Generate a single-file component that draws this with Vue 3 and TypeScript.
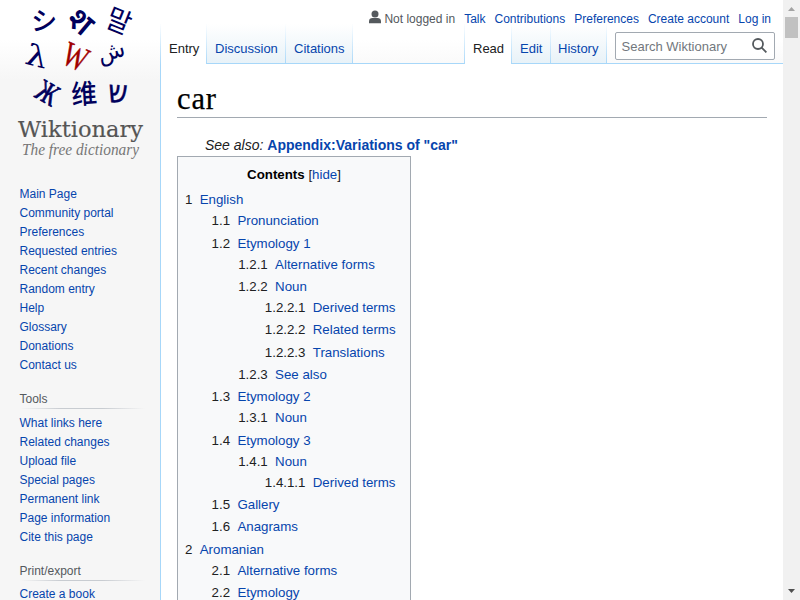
<script setup lang="ts">
interface Glyph { char: string; x: number; y: number; angle: number; size: number; stretch: number; kind: string }
interface TocEntry { number: string; text: string; step: number }
interface Portal { title: string; links: string[] }

const glyphs: Glyph[] = [
  { char: 'シ', x: 44, y: 21, angle: 2, size: 26, stretch: 1, kind: 'cjk' },
  { char: 'श', x: 81, y: 21, angle: 40, size: 32, stretch: 1, kind: 'sans' },
  { char: '말', x: 119, y: 21, angle: 22, size: 28, stretch: 0.95, kind: 'korean' },
  { char: 'λ', x: 37, y: 56, angle: 14, size: 29, stretch: 1.2, kind: 'serif' },
  { char: 'W', x: 76, y: 56, angle: 24, size: 35, stretch: 0.74, kind: 'red' },
  { char: 'ش', x: 111, y: 51, angle: -16, size: 23, stretch: 0.98, kind: 'arabic' },
  { char: 'Ж', x: 48, y: 92, angle: 30, size: 31, stretch: 0.74, kind: 'cyrillic' },
  { char: '维', x: 84, y: 94, angle: -4, size: 27, stretch: 0.95, kind: 'cjk' },
  { char: 'ש', x: 118, y: 91, angle: 2, size: 32, stretch: 0.85, kind: 'hebrew' }
]

const personal: string[] = ['Talk', 'Contributions', 'Preferences', 'Create account', 'Log in']

const portals: Portal[] = [
  {
    title: '',
    links: ['Main Page', 'Community portal', 'Preferences', 'Requested entries', 'Recent changes', 'Random entry', 'Help', 'Glossary', 'Donations', 'Contact us']
  },
  {
    title: 'Tools',
    links: ['What links here', 'Related changes', 'Upload file', 'Special pages', 'Permanent link', 'Page information', 'Cite this page']
  },
  { title: 'Print/export', links: ['Create a book'] }
]

const toc: TocEntry[] = [
  { number: '1', text: 'English', step: 21 },
  { number: '1.1', text: 'Pronunciation', step: 23 },
  { number: '1.2', text: 'Etymology 1', step: 21 },
  { number: '1.2.1', text: 'Alternative forms', step: 22 },
  { number: '1.2.2', text: 'Noun', step: 21 },
  { number: '1.2.2.1', text: 'Derived terms', step: 22 },
  { number: '1.2.2.2', text: 'Related terms', step: 23 },
  { number: '1.2.2.3', text: 'Translations', step: 22 },
  { number: '1.2.3', text: 'See also', step: 22 },
  { number: '1.3', text: 'Etymology 2', step: 21 },
  { number: '1.3.1', text: 'Noun', step: 23 },
  { number: '1.4', text: 'Etymology 3', step: 21 },
  { number: '1.4.1', text: 'Noun', step: 21 },
  { number: '1.4.1.1', text: 'Derived terms', step: 22 },
  { number: '1.5', text: 'Gallery', step: 22 },
  { number: '1.6', text: 'Anagrams', step: 23 },
  { number: '2', text: 'Aromanian', step: 21 },
  { number: '2.1', text: 'Alternative forms', step: 22 },
  { number: '2.2', text: 'Etymology', step: 22 }
]

const level = (entry: TocEntry): number => entry.number.split('.').length
</script>

<template>
  <div class="window">
    <div class="page">
      <aside class="sidebar">
        <svg class="logo" width="160" height="165" viewBox="0 0 160 165">
          <text
            v-for="g in glyphs"
            :key="g.char"
            :class="['glyph', g.kind]"
            :font-size="g.size"
            :transform="`translate(${g.x} ${g.y}) rotate(${g.angle}) scale(${g.stretch} 1)`"
            text-anchor="middle"
            :dy="g.size * 0.36"
          >{{ g.char }}</text>
          <text class="wordmark" x="18" y="137" textLength="125" lengthAdjust="spacingAndGlyphs">Wiktionary</text>
          <text class="tagline" x="22" y="155" textLength="117" lengthAdjust="spacingAndGlyphs">The free dictionary</text>
        </svg>
        <nav v-for="portal in portals" :key="portal.title" class="portal">
          <h3 v-if="portal.title">{{ portal.title }}</h3>
          <ul>
            <li v-for="link in portal.links" :key="link"><a>{{ link }}</a></li>
          </ul>
        </nav>
      </aside>

      <div class="column">
        <header class="head">
          <div class="personal">
            <span class="anon">
              <svg width="12" height="14" viewBox="0 0 12 14"><circle cx="6" cy="4" r="3.5" /><path d="M0 13.3V11.2C0 9.1 1.6 8 3.4 8h5.2C10.4 8 12 9.1 12 11.2v2.1z" /></svg>
              Not logged in
            </span>
            <a v-for="item in personal" :key="item">{{ item }}</a>
          </div>
          <div class="navigation">
            <div class="tabs left">
              <span class="tab selected entry">Entry</span>
              <a class="tab discussion">Discussion</a>
              <a class="tab citations">Citations</a>
            </div>
            <div class="tabs right">
              <span class="tab selected read">Read</span>
              <a class="tab edit">Edit</a>
              <a class="tab history">History</a>
            </div>
            <div class="search">
              <span>Search Wiktionary</span>
              <svg width="15" height="15" viewBox="0 0 15 15"><circle cx="6" cy="6" r="5" /><path d="M9.6 9.6l4.8 4.8" /></svg>
            </div>
          </div>
        </header>
        <main class="content">
          <h1>car</h1>
          <p class="hatnote"><i>See also:</i> <a>Appendix:Variations of "car"</a></p>
          <section class="toc">
            <div class="toc-title"><b>Contents</b> [<a>hide</a>]</div>
            <div
              v-for="entry in toc"
              :key="entry.number"
              :class="['toc-row', 'level-' + level(entry)]"
              :style="{ height: entry.step + 'px' }"
            ><span class="toc-number">{{ entry.number }}</span><a>{{ entry.text }}</a></div>
          </section>
        </main>
      </div>
    </div>
    <div class="scrollbar">
      <svg class="up" width="17" height="17" viewBox="0 0 17 17"><path d="M5 11h7L8.5 7z" /></svg>
      <div class="thumb"></div>
      <svg class="down" width="17" height="17" viewBox="0 0 17 17"><path d="M5 6h7L8.5 10z" /></svg>
    </div>
  </div>
</template>

<style>
html, body { margin: 0; overflow: hidden; }
</style>

<style scoped>
.window {
  display: flex;
  width: 800px;
  height: 600px;
  overflow: hidden;
  font-family: "Liberation Sans", Arial, sans-serif;
  color: #202122;
}
.page {
  display: flex;
  width: 783px;
  height: 600px;
  overflow: hidden;
  background: linear-gradient(#fff 50%, #f6f6f6 100%) 0 0 / 100% 80px no-repeat #f6f6f6;
}
a { color: #0645ad; text-decoration: none; }
.sidebar { width: 160px; flex: none; font-size: 12px; }
.logo { display: block; margin-bottom: 20px; overflow: visible; }
.glyph { fill: #00005c; }
.cjk { font-family: "Noto Sans CJK SC", sans-serif; font-weight: 500; }
.korean { font-family: "Noto Sans CJK KR", sans-serif; font-weight: 400; }
.sans { font-family: "Noto Sans", sans-serif; font-weight: 600; }
.serif { font-family: "DejaVu Serif", "Liberation Serif", serif; }
.cyrillic { font-family: "Liberation Serif", serif; stroke: #00005c; stroke-width: 0.8; }
.hebrew { font-family: "DejaVu Sans", sans-serif; stroke: #00005c; stroke-width: 0.4; }
.arabic { font-family: "DejaVu Sans", sans-serif; }
.red { font-family: "Liberation Serif", serif; fill: #a00000; stroke: #a00000; stroke-width: 0.4; }
.wordmark { font: 22px "DejaVu Serif", "Liberation Serif", serif; fill: #555; stroke: #555; stroke-width: 0.15; }
.tagline { font: italic 16px "Liberation Serif", serif; fill: #777; }
.portal { margin: 0 0 14px 19.5px; }
.portal h3 {
  margin: 0 15px 5px 0;
  height: 20px;
  line-height: 20px;
  font-size: 12px;
  font-weight: normal;
  color: #54595d;
  background: linear-gradient(to right, rgba(200, 204, 209, 0) 0, #c8ccd1 33%, #c8ccd1 66%, rgba(200, 204, 209, 0) 100%) 0 100% / 100% 1px no-repeat;
}
.portal:last-child h3 { margin-bottom: 4px; }
.portal ul { list-style: none; margin: 0; padding: 0; }
.portal li { height: 19px; line-height: 19px; white-space: nowrap; }
.column { flex: 1; display: flex; flex-direction: column; min-width: 0; }
.head { height: 64px; display: flex; flex-direction: column; flex: none; }
.personal {
  height: 24px;
  padding: 7px 12px 0 0;
  box-sizing: border-box;
  display: flex;
  justify-content: flex-end;
  gap: 9px;
  font-size: 12px;
  line-height: 24px;
  white-space: nowrap;
}
.anon { display: flex; gap: 3px; color: #54595d; }
.anon svg { margin-top: 3px; fill: #54595d; }
.navigation {
  flex: 1;
  display: flex;
  box-shadow: inset 0 -1px #a7d7f9;
  font-size: 13px;
}
.tabs { display: flex; }
.tabs.right { margin-left: auto; }
.tab {
  box-sizing: border-box;
  height: 40px;
  padding: 17px 0 0 8px;
  line-height: 15px;
  border-right: 1px solid;
  border-image: linear-gradient(rgba(167, 215, 249, 0), #a7d7f9) 1;
  border-top: 0;
  border-bottom: 0;
  border-left: 0;
  background: linear-gradient(#fff, #e8f2f8) 0 0 / 100% 39px no-repeat;
}
.tab.selected { background: #fff; color: #202122; }
.entry { width: 47px; border-left: 1px solid; }
.discussion { width: 79px; }
.citations { width: 67px; }
.read { width: 48px; border-left: 1px solid; }
.edit { width: 39px; }
.history { width: 56px; padding-left: 7px; }
.search {
  display: flex;
  justify-content: space-between;
  box-sizing: border-box;
  width: 160px;
  height: 28px;
  margin: 8px 8px 0 8px;
  padding: 0 7px 0 5.5px;
  border: 1px solid #a2a9b1;
  border-radius: 2px;
  background: rgba(255, 255, 255, 0.8);
  color: #72777d;
  line-height: 27px;
}
.search svg { margin-top: 5px; fill: none; stroke: #54595d; stroke-width: 1.8; }
.content {
  flex: 1;
  border-left: 1px solid #a7d7f9;
  background: #fff;
  padding: 16px 16px 0;
  font-size: 14px;
}
h1 {
  margin: 0;
  height: 37px;
  border-bottom: 1px solid #a2a9b1;
  color: #000;
  font: 30.5px/38px "Liberation Serif", serif;
  letter-spacing: 0.9px;
  -webkit-text-stroke: 0.25px #000;
}
.hatnote { margin: 16px 0 0 28px; height: 23px; line-height: 22px; }
.hatnote a { font-weight: bold; }
.toc {
  box-sizing: border-box;
  width: 234px;
  height: 480px;
  margin-top: -1px;
  padding: 7px;
  border: 1px solid #a2a9b1;
  background: #f8f9fa;
  font-size: 13.3px;
  white-space: nowrap;
}
.toc-title { height: 25px; line-height: 21px; text-align: center; }
.toc-title b { color: #000; }
.toc-row { line-height: 21px; }
.toc-number { margin-right: 7.3px; }
.level-2 { padding-left: 26.6px; }
.level-3 { padding-left: 53.2px; }
.level-4 { padding-left: 79.8px; }
.scrollbar {
  display: flex;
  flex-direction: column;
  width: 17px;
  height: 600px;
  background: #f1f1f1;
}
.scrollbar svg { display: block; flex: none; }
.up { fill: #a3a3a3; }
.down { margin-top: auto; fill: #505050; }
.thumb { width: 13px; height: 21px; margin: 0 2px; background: #c1c1c1; }
</style>
